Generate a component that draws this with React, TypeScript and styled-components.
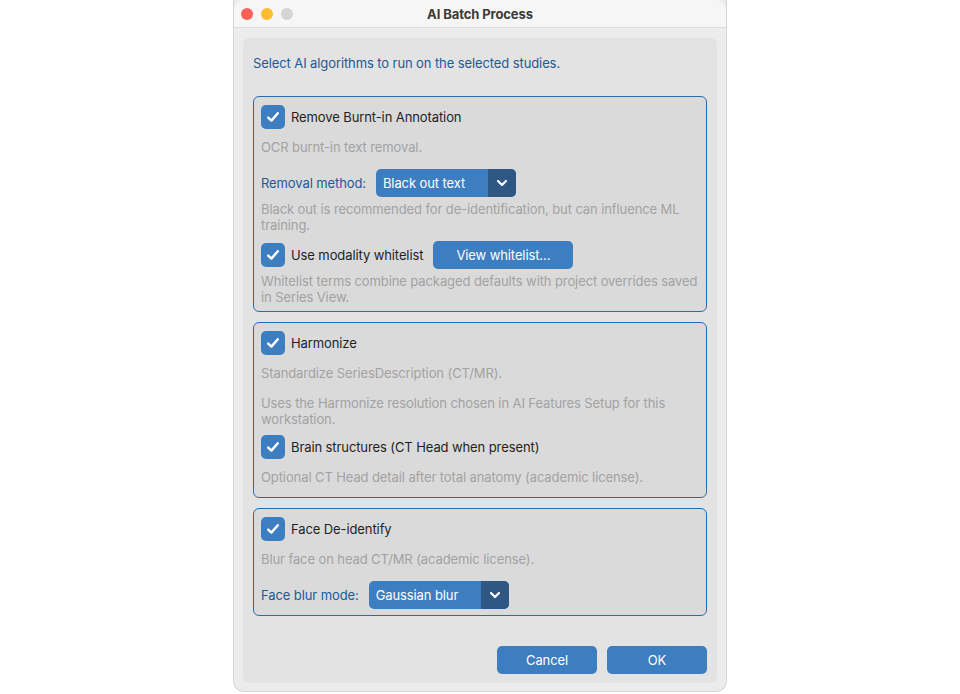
import React from 'react'
import styled, { createGlobalStyle } from 'styled-components'

const GlobalStyle = createGlobalStyle`
  html, body {
    margin: 0;
    padding: 0;
    background: #ffffff;
  }
  body {
    font-family: Inter, "Noto Sans", "Liberation Sans", sans-serif;
    font-size: 13px;
    letter-spacing: -0.1px;
    -webkit-font-smoothing: antialiased;
  }
`

const colors = {
  accent: '#3c7ebf',
  accentDark: '#2f5784',
  label: '#1b5a98',
  text: '#1f1f1f',
  weak: '#a2a2a2',
  border: '#2a6bb0',
}

const Page = styled.div`
  width: 960px;
  height: 694px;
  display: flex;
  justify-content: center;
  overflow: hidden;
`

const Window = styled.div`
  width: 494px;
  height: 692px;
  border: 1px solid #d6d6d6;
  border-top: none;
  border-radius: 0 0 11px 11px;
  background: #ececec;
  display: flex;
  flex-direction: column;
  box-sizing: border-box;
  overflow: hidden;
`

const TitleBar = styled.div`
  height: 28px;
  flex: none;
  display: flex;
  align-items: center;
  position: relative;
  background: #f6f6f6;
  border-bottom: 1px solid #dcdcdc;
  border-radius: 11px 11px 0 0;
  box-sizing: border-box;
`

const Lights = styled.div`
  display: flex;
  gap: 8px;
  padding-left: 7px;
`

const Light = styled.span<{ $color: string }>`
  width: 12px;
  height: 12px;
  border-radius: 50%;
  background: ${({ $color }) => $color};
`

const Title = styled.div`
  position: absolute;
  left: 0;
  right: 0;
  text-align: center;
  font-weight: 700;
  color: #3a3a3a;
  pointer-events: none;
`

const Body = styled.div`
  flex: 1;
  padding: 10px 9px 8px;
  display: flex;
`

const Panel = styled.div`
  flex: 1;
  background: #e3e3e3;
  border-radius: 6px;
  padding: 16px 10px 9px;
  display: flex;
  flex-direction: column;
`

const Intro = styled.div`
  color: ${colors.label};
  line-height: 18px;
  margin-bottom: 24px;
`

const Group = styled.div`
  border: 1px solid ${colors.border};
  border-radius: 6px;
  background: #dadada;
  padding: 8px 2px 0 7px;
  display: flex;
  flex-direction: column;
  & + & {
    margin-top: 10px;
  }
`

const CheckRow = styled.div<{ $mt?: number }>`
  display: flex;
  align-items: center;
  height: 28px;
  margin-top: ${({ $mt }) => $mt ?? 0}px;
  color: ${colors.text};
  &:first-child {
    height: 24px;
  }
`

const Box = styled.span`
  width: 24px;
  height: 24px;
  border-radius: 5px;
  background: ${colors.accent};
  display: inline-flex;
  align-items: center;
  justify-content: center;
  margin-right: 6px;
  flex: none;
`

const Desc = styled.div<{ $mt?: number; $mb?: number }>`
  color: ${colors.weak};
  line-height: 16px;
  margin-top: ${({ $mt }) => $mt ?? 0}px;
  margin-bottom: ${({ $mb }) => $mb ?? 0}px;
`

const FieldRow = styled.div<{ $mt?: number; $mb?: number }>`
  display: flex;
  align-items: center;
  height: 28px;
  margin-top: ${({ $mt }) => $mt ?? 0}px;
  margin-bottom: ${({ $mb }) => $mb ?? 0}px;
`

const FieldLabel = styled.span`
  color: ${colors.label};
  margin-right: 10px;
`

const Select = styled.div<{ $w: number }>`
  width: ${({ $w }) => $w}px;
  height: 28px;
  display: flex;
  border-radius: 5px;
  overflow: hidden;
  background: ${colors.accent};
  color: #ffffff;
`

const SelectValue = styled.span`
  flex: 1;
  display: flex;
  align-items: center;
  padding-left: 7px;
`

const SelectArrow = styled.span`
  width: 28px;
  background: ${colors.accentDark};
  display: flex;
  align-items: center;
  justify-content: center;
`

const Button = styled.button<{ $w: number; $ml?: number }>`
  width: ${({ $w }) => $w}px;
  height: 28px;
  margin-left: ${({ $ml }) => $ml ?? 0}px;
  border: none;
  border-radius: 5px;
  background: ${colors.accent};
  color: #ffffff;
  font: inherit;
  letter-spacing: inherit;
  padding: 0;
`

const Spacer = styled.div`
  flex: 1;
`

const Footer = styled.div`
  display: flex;
  justify-content: flex-end;
  gap: 10px;
`

const Check = () => (
  <Box>
    <svg width="16" height="16" viewBox="0 0 16 16">
      <polyline
        points="3.2,8.6 6.4,11.6 12.8,4.2"
        fill="none"
        stroke="#ffffff"
        strokeWidth="2.4"
        strokeLinecap="round"
        strokeLinejoin="round"
      />
    </svg>
  </Box>
)

const Chevron = () => (
  <svg width="12" height="8" viewBox="0 0 12 8">
    <polyline
      points="2,2 6,6 10,2"
      fill="none"
      stroke="#ffffff"
      strokeWidth="2.2"
      strokeLinecap="round"
      strokeLinejoin="round"
    />
  </svg>
)

const Dropdown = ({ value, width }: { value: string; width: number }) => (
  <Select $w={width}>
    <SelectValue>{value}</SelectValue>
    <SelectArrow>
      <Chevron />
    </SelectArrow>
  </Select>
)

const App: React.FC = () => (
  <Page>
    <GlobalStyle />
    <Window>
      <TitleBar>
        <Lights>
          <Light $color="#fe5f57" />
          <Light $color="#febc2e" />
          <Light $color="#d4d4d4" />
        </Lights>
        <Title>AI Batch Process</Title>
      </TitleBar>
      <Body>
        <Panel>
          <Intro>Select AI algorithms to run on the selected studies.</Intro>

          <Group>
            <CheckRow>
              <Check />
              Remove Burnt-in Annotation
            </CheckRow>
            <Desc $mt={10}>OCR burnt-in text removal.</Desc>
            <FieldRow $mt={14}>
              <FieldLabel>Removal method:</FieldLabel>
              <Dropdown value="Black out text" width={140} />
            </FieldRow>
            <Desc $mt={4}>
              Black out is recommended for de-identification, but can influence ML
              training.
            </Desc>
            <CheckRow $mt={8}>
              <Check />
              Use modality whitelist
              <Button $w={140} $ml={10}>
                View whitelist...
              </Button>
            </CheckRow>
            <Desc $mt={4} $mb={6}>
              Whitelist terms combine packaged defaults with project overrides saved
              in Series View.
            </Desc>
          </Group>

          <Group>
            <CheckRow>
              <Check />
              Harmonize
            </CheckRow>
            <Desc $mt={10}>Standardize SeriesDescription (CT/MR).</Desc>
            <Desc $mt={14}>
              Uses the Harmonize resolution chosen in AI Features Setup for this
              workstation.
            </Desc>
            <CheckRow $mt={6}>
              <Check />
              Brain structures (CT Head when present)
            </CheckRow>
            <Desc $mt={8} $mb={12}>
              Optional CT Head detail after total anatomy (academic license).
            </Desc>
          </Group>

          <Group>
            <CheckRow>
              <Check />
              Face De-identify
            </CheckRow>
            <Desc $mt={10}>Blur face on head CT/MR (academic license).</Desc>
            <FieldRow $mt={14} $mb={6}>
              <FieldLabel>Face blur mode:</FieldLabel>
              <Dropdown value="Gaussian blur" width={140} />
            </FieldRow>
          </Group>

          <Spacer />
          <Footer>
            <Button $w={100}>Cancel</Button>
            <Button $w={100}>OK</Button>
          </Footer>
        </Panel>
      </Body>
    </Window>
  </Page>
)

export default App
